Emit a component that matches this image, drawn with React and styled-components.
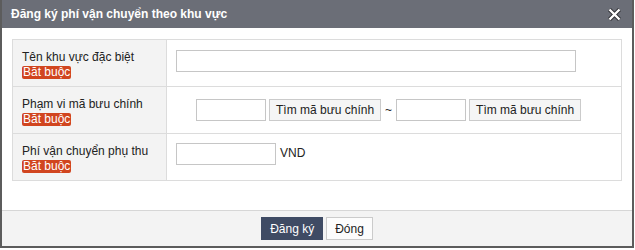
import React from "react";
import styled, { createGlobalStyle } from "styled-components";

const Global = createGlobalStyle`
  body {
    margin: 0;
    background: #fff;
    font-family: "Liberation Sans", Arial, sans-serif;
    font-size: 12px;
    color: #222;
  }
`;

const Dialog = styled.div`
  width: 630px;
  height: 246px;
  border: 2px solid #5c5c5c;
  border-top: 0;
  display: flex;
  flex-direction: column;
  background: #fff;
`;

const TitleBar = styled.div`
  height: 28px;
  background: #6b6e77;
  display: flex;
  align-items: center;
  justify-content: space-between;
  padding: 0 10px 0 9px;
  color: #fff;
  font-weight: bold;
  font-size: 12px;
`;

const Close = styled.button`
  border: 0;
  background: none;
  padding: 0;
  width: 15px;
  height: 15px;
  display: flex;
  cursor: pointer;
`;

const Body = styled.div`
  flex: 1;
  padding: 11px 10px 0;
`;

const Table = styled.div`
  border: 1px solid #dcdcdc;
`;

const Row = styled.div`
  display: grid;
  grid-template-columns: 154px 1fr;
  min-height: 46px;
  & + & {
    border-top: 1px solid #dcdcdc;
  }
`;

const Label = styled.div`
  background: #f3f3f3;
  border-right: 1px solid #dcdcdc;
  padding: 10px 9px 0;
  line-height: 15px;
  color: #222;
`;

const Badge = styled.span`
  display: inline-block;
  margin-top: 1px;
  padding: 0 1px;
  background: #d1451f;
  color: #fff;
  line-height: 13px;
  border-radius: 2px;
`;

const Value = styled.div`
  display: flex;
  align-items: ${(p) => (p.$center ? "center" : "flex-start")};
  gap: 3px;
  padding: ${(p) => p.$pad || "10px 9px"};
`;

const Input = styled.input`
  box-sizing: border-box;
  width: ${(p) => p.$w}px;
  height: 22px;
  border: 1px solid #c6c6c6;
  padding: 0 4px;
  margin: 0;
  font: inherit;
  outline: none;
`;

const Button = styled.button`
  box-sizing: border-box;
  height: ${(p) => p.$h || 22}px;
  padding: 0 ${(p) => p.$px || 6}px;
  margin: 0;
  border: 1px solid ${(p) => (p.$primary ? "#3f4b64" : "#cbcbcb")};
  background: ${(p) => (p.$primary ? "#3f4b64" : p.$light ? "#fcfcfc" : "#f5f5f5")};
  color: ${(p) => (p.$primary ? "#fff" : "#222")};
  font-family: inherit;
  font-size: 12px;
  cursor: pointer;
`;

const Tilde = styled.span`
  padding: 0 1px;
`;

const Unit = styled.span`
  margin-left: 1px;
  line-height: 15px;
  padding-top: 3px;
`;

const Footer = styled.div`
  height: 35px;
  border-top: 1px solid #d6d6d6;
  background: #f3f3f3;
  display: flex;
  align-items: center;
  justify-content: center;
  gap: 3px;
`;

function RequiredLabel({ text }) {
  return (
    <Label>
      <div>{text}</div>
      <Badge>Bắt buộc</Badge>
    </Label>
  );
}

export default function App() {
  return (
    <>
      <Global />
      <Dialog>
        <TitleBar>
          <span>Đăng ký phí vận chuyển theo khu vực</span>
          <Close aria-label="close">
            <svg width="15" height="15" viewBox="0 0 15 15">
              <path d="M2.5 2.5 L12.5 12.5 M12.5 2.5 L2.5 12.5" stroke="#2e2f33" strokeWidth="4.2" />
              <path d="M2.5 2.5 L12.5 12.5 M12.5 2.5 L2.5 12.5" stroke="#fff" strokeWidth="2.4" />
            </svg>
          </Close>
        </TitleBar>
        <Body>
          <Table>
            <Row>
              <RequiredLabel text="Tên khu vực đặc biệt" />
              <Value>
                <Input $w={400} />
              </Value>
            </Row>
            <Row>
              <RequiredLabel text="Phạm vi mã bưu chính" />
              <Value $center $pad="0 9px 0 29px">
                <Input $w={70} />
                <Button>Tìm mã bưu chính</Button>
                <Tilde>~</Tilde>
                <Input $w={70} />
                <Button>Tìm mã bưu chính</Button>
              </Value>
            </Row>
            <Row>
              <RequiredLabel text="Phí vận chuyển phụ thu" />
              <Value $pad="9px 9px">
                <Input $w={100} />
                <Unit>VND</Unit>
              </Value>
            </Row>
          </Table>
        </Body>
        <Footer>
          <Button $primary $h={23} $px={8}>Đăng ký</Button>
          <Button $light $h={23} $px={8}>Đóng</Button>
        </Footer>
      </Dialog>
    </>
  );
}
